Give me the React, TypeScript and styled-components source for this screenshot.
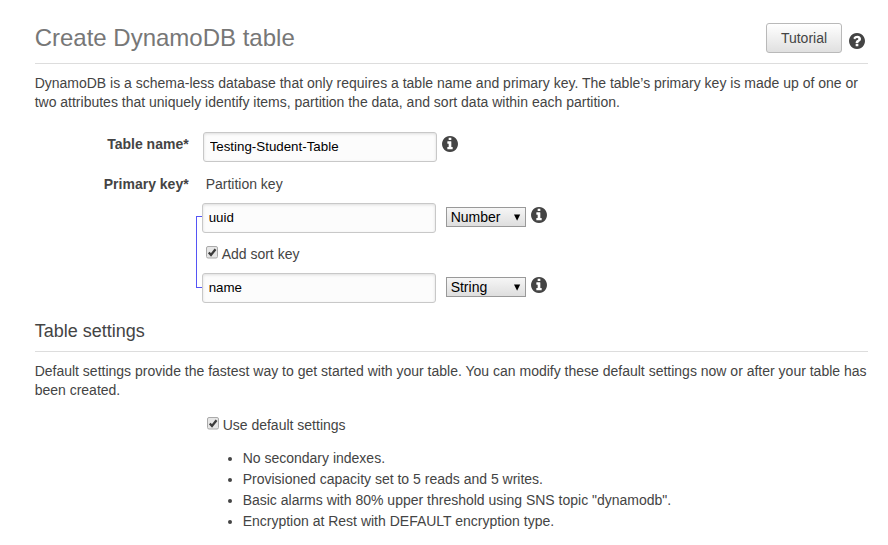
import React from "react";
import styled, { createGlobalStyle } from "styled-components";

const GlobalStyle = createGlobalStyle`
  *, *::before, *::after { box-sizing: border-box; }
  body {
    margin: 0;
    background: #fff;
    color: #444;
    font: 14px/19px "Liberation Sans", Arial, sans-serif;
    overflow: hidden;
  }
  h1, h2, p, ul { margin: 0; font-weight: normal; }
`;

const Page = styled.main`
  width: 888px;
  height: 545px;
  padding: 0 20px 0 34.640px;
  overflow: hidden;
`;

const Header = styled.header`
  display: flex;
  align-items: flex-start;
  height: 64px;
  padding: 23px 3px 0 0;
  border-bottom: 1px solid #ddd;
`;

const Title = styled.h1`
  flex: 1;
  color: #777;
  font-size: 24px;
  line-height: 30px;
`;

const TutorialButton = styled.button`
  width: 76px;
  height: 30px;
  padding: 0;
  border: 1px solid #b9b9b9;
  border-radius: 3px;
  background: linear-gradient(#fff, #e0e0e0);
  color: #444;
  font: 14px/28px "Liberation Sans", Arial, sans-serif;
`;

const Icon = styled.svg<{ $top: number; $left: number }>`
  flex: none;
  display: block;
  width: 16px;
  height: 16px;
  margin: ${(p) => p.$top}px 0 0 ${(p) => p.$left}px;
  fill: #444;
`;

const Paragraph = styled.p`
  padding-top: 10px;
  white-space: nowrap;
`;

const Form = styled.form`
  display: grid;
  grid-template-columns: 154px 1fr;
  column-gap: 14px;
  padding-top: 20px;
`;

const FieldLabel = styled.label`
  padding-top: 3px;
  text-align: right;
  font-weight: bold;
`;

const Row = styled.div<{ $height: number }>`
  display: flex;
  align-items: flex-start;
  height: ${(p) => p.$height}px;
`;

const TextInput = styled.input`
  width: 234px;
  height: 30px;
  padding: 0 6px 2px;
  border: 1px solid #c8c8c8;
  border-radius: 3px;
  outline: none;
  background: #fcfcfc;
  box-shadow: inset 0 1px 3px rgba(0, 0, 0, 0.12);
  color: #000;
  font: 13.333px "Liberation Sans", Arial, sans-serif;
`;

const KeyHeading = styled.div`
  padding: 3px 0 0 3px;
  height: 31px;
`;

const KeyGroup = styled.div`
  display: flex;
  margin-left: -7px;
`;

const Bracket = styled.div`
  width: 6px;
  height: 72px;
  margin-top: 13px;
  border: 1px solid #5555f5;
  border-right: 0;
`;

const SelectBox = styled.div`
  display: flex;
  align-items: center;
  justify-content: space-between;
  width: 80px;
  height: 20px;
  margin: 4px 0 0 10px;
  padding: 0 4px;
  border: 1px solid #999;
  background: linear-gradient(#f6f6f6, #dedede);
  color: #000;
  line-height: 18px;
`;

const Arrow = styled.svg`
  width: 8px;
  height: 7px;
`;

const CheckLabel = styled.label<{ $indent: number }>`
  display: flex;
  align-items: flex-start;
  padding-left: ${(p) => p.$indent}px;
`;

const Box = styled.svg`
  width: 12px;
  height: 13px;
  margin: 1px 4px 0 0;
`;

const SectionTitle = styled.h2`
  height: 38px;
  padding-top: 5px;
  border-bottom: 1px solid #ddd;
  font-size: 18px;
  line-height: 24px;
`;

const Defaults = styled.section`
  padding: 16px 0 0 172px;
`;

const Items = styled.ul`
  padding: 13px 0 0 36px;
  line-height: 21px;
  white-space: nowrap;
`;

const DISC =
  "m640 416q0 209-103 385.500t-279.500 279.500-385.500 103-385.500-103-279.500-279.500-103-385.500 103-385.500 279.500-279.500 385.500-103 385.500 103 279.500 279.500 103 385.500z";

const InfoIcon = ({ top, left }: { top: number; left: number }) => (
  <Icon $top={top} $left={left} viewBox="128 128 1536 1536">
    <path
      d={
        "M1152 1376v-160q0-14-9-23t-23-9h-96v-512q0-14-9-23t-23-9h-320q-14 0-23 9t-9 23v160q0 14 9 23t23 9h96v320h-96q-14 0-23 9t-9 23v160q0 14 9 23t23 9h448q14 0 23-9t9-23zm-128-896v-160q0-14-9-23t-23-9h-192q-14 0-23 9t-9 23v160q0 14 9 23t23 9h192q14 0 23-9t9-23z" +
        DISC
      }
    />
  </Icon>
);

const HelpIcon = () => (
  <Icon $top={10} $left={7} viewBox="128 128 1536 1536">
    <path d="M1024 1376v-192q0-14-9-23t-23-9h-192q-14 0-23 9t-9 23v192q0 14 9 23t23 9h192q14 0 23-9t9-23zm256-672q0-88-55.500-163t-138.500-116-170-41q-243 0-371 213-15 24 8 42l132 100q7 6 19 6 16 0 25-12 53-68 86-92 34-24 86-24 48 0 85.500 26t37.500 59q0 38-20 61t-68 45q-63 28-115.500 86.500t-52.500 125.500v36q0 14 9 23t23 9h192q14 0 23-9t9-23q0-19 21.500-49.500t54.500-49.500q32-18 49-28.500t46-35 44.500-48 28-60.500 12.500-81zm384 192q0 209-103 385.500t-279.500 279.500-385.500 103-385.500-103-279.500-279.500-103-385.500 103-385.500 279.500-279.500 385.500-103 385.500 103 279.500 279.500 103 385.500z" />
  </Icon>
);

const Select = ({ value }: { value: string }) => (
  <SelectBox role="combobox" aria-label="Key type">
    {value}
    <Arrow viewBox="0 0 8 7">
      <path d="M1 0.500h6.200L4.100 6.700z" fill="#000" />
    </Arrow>
  </SelectBox>
);

const Check = ({ text, indent }: { text: string; indent: number }) => (
  <CheckLabel $indent={indent}>
    <Box viewBox="0 0 12 13">
      <rect x="0.500" y="0.500" width="11" height="11.500" rx="1.500" fill="#e6e6e6" stroke="#aaa" />
      <path d="M2.800 6.400L5 8.900L9.500 3.200" fill="none" stroke="#3c3c3c" strokeWidth="2.300" />
    </Box>
    {text}
  </CheckLabel>
);

const SortRow = styled.div`
  height: 40px;
  padding-top: 12px;
`;

export default function App() {
  return (
    <Page>
      <GlobalStyle />
      <Header>
        <Title>Create DynamoDB table</Title>
        <TutorialButton>Tutorial</TutorialButton>
        <HelpIcon />
      </Header>
      <Paragraph>
        DynamoDB is a schema-less database that only requires a table name and primary key. The table’s primary key is made up of one or
        <br />
        two attributes that uniquely identify items, partition the data, and sort data within each partition.
      </Paragraph>
      <Form>
        <FieldLabel htmlFor="table-name">Table name*</FieldLabel>
        <Row $height={40}>
          <TextInput id="table-name" defaultValue="Testing-Student-Table" />
          <InfoIcon top={4} left={5} />
        </Row>
        <FieldLabel htmlFor="partition-key">Primary key*</FieldLabel>
        <div>
          <KeyHeading>Partition key</KeyHeading>
          <KeyGroup>
            <Bracket />
            <div>
              <Row $height={30}>
                <TextInput id="partition-key" defaultValue="uuid" />
                <Select value="Number" />
                <InfoIcon top={4} left={5} />
              </Row>
              <SortRow>
                <Check text="Add sort key" indent={4} />
              </SortRow>
              <Row $height={41}>
                <TextInput aria-label="Sort key" defaultValue="name" />
                <Select value="String" />
                <InfoIcon top={4} left={5} />
              </Row>
            </div>
          </KeyGroup>
        </div>
      </Form>
      <SectionTitle>Table settings</SectionTitle>
      <Paragraph>
        Default settings provide the fastest way to get started with your table. You can modify these default settings now or after your table has
        <br />
        been created.
      </Paragraph>
      <Defaults>
        <Check text="Use default settings" indent={0} />
        <Items>
          <li>No secondary indexes.</li>
          <li>Provisioned capacity set to 5 reads and 5 writes.</li>
          <li>Basic alarms with 80% upper threshold using SNS topic "dynamodb".</li>
          <li>Encryption at Rest with DEFAULT encryption type.</li>
        </Items>
      </Defaults>
    </Page>
  );
}
